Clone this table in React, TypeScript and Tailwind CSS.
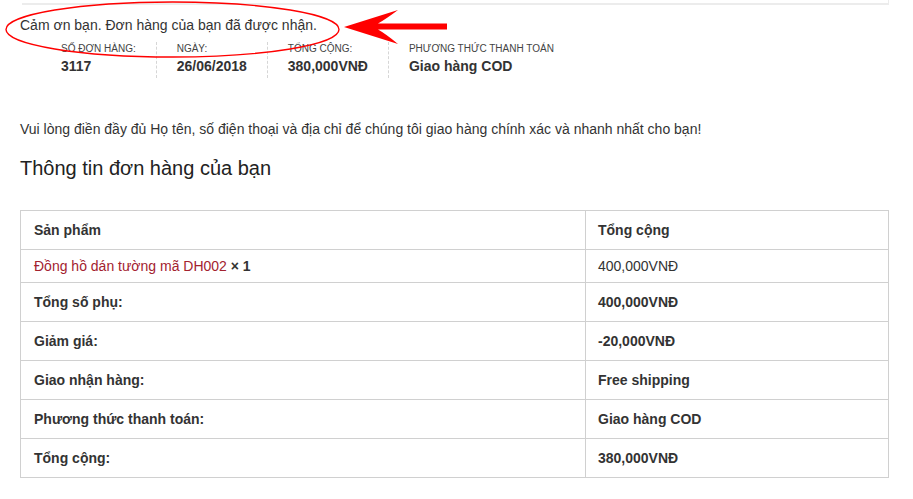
const details = [
  { label: "Số đơn hàng:", value: "3117" },
  { label: "Ngày:", value: "26/06/2018" },
  { label: "Tổng cộng:", value: "380,000VNĐ" },
  { label: "Phương thức thanh toán", value: "Giao hàng COD" },
];

const totals = [
  { label: "Tổng số phụ:", value: "400,000VNĐ" },
  { label: "Giảm giá:", value: "-20,000VNĐ" },
  { label: "Giao nhận hàng:", value: "Free shipping" },
  { label: "Phương thức thanh toán:", value: "Giao hàng COD" },
  { label: "Tổng cộng:", value: "380,000VNĐ" },
];

export default function App() {
  return (
    <div className="min-h-[499px] w-[913px] bg-white font-['Liberation_Sans',Arial,sans-serif] text-[#333]">
      <div className="ml-[22px] h-[5px] w-[867px] border-b-2 border-r border-[#ececec]" />

      <div className="relative px-5 pt-[10px]">
        <p className="text-[14px] leading-5">Cảm ơn bạn. Đơn hàng của bạn đã được nhận.</p>

        {/* red annotation: ellipse + arrow */}
        <svg className="pointer-events-none absolute left-0 top-[-5px]" width="460" height="70" viewBox="0 0 460 70">
          <ellipse cx="172.5" cy="29.5" rx="166.5" ry="27.5" fill="none" stroke="#f00" strokeWidth="1.4" />
          <path
            d="M344 27 L398 10 Q386 19 378 23.5 L447 23.5 L447 29.5 L378 29.5 Q386 34 398 44 Z"
            fill="#f00"
          />
        </svg>

        <ul className="ml-[41px] mt-[7px] flex">
          {details.map((d, i) => (
            <li
              key={d.label}
              className={
                i < details.length - 1
                  ? "mr-5 border-r border-dashed border-[#d6d6d6] pb-[2px] pr-5"
                  : "pb-[2px]"
              }
            >
              <div className="text-[10px] uppercase leading-[14px] text-[#444]">{d.label}</div>
              <div className="text-[14px] font-bold leading-5 text-[#333]">{d.value}</div>
            </li>
          ))}
        </ul>

        <p className="mt-[41px] text-[14px] leading-5">
          Vui lòng điền đầy đủ Họ tên, số điện thoại và địa chỉ để chúng tôi giao hàng chính xác và nhanh nhất cho bạn!
        </p>

        <h2 className="mt-[15px] text-[20px] leading-7 text-[#222]">Thông tin đơn hàng của bạn</h2>

        <table className="mt-[28px] w-[869px] border-collapse border border-[#d0d0d0] text-[14px]">
          <thead>
            <tr className="h-[39px]">
              <th className="w-[565px] border border-[#d0d0d0] pl-[13px] text-left font-bold">Sản phẩm</th>
              <th className="border border-[#d0d0d0] pl-3 text-left font-bold">Tổng cộng</th>
            </tr>
          </thead>
          <tbody>
            <tr className="h-[33px]">
              <td className="border border-[#d0d0d0] pl-[13px]">
                <span className="text-[#a3222f]">Đồng hồ dán tường mã DH002</span>{" "}
                <strong className="font-bold">× 1</strong>
              </td>
              <td className="border border-[#d0d0d0] pl-3">400,000VNĐ</td>
            </tr>
          </tbody>
          <tfoot>
            {totals.map((t) => (
              <tr key={t.label} className="h-[39px]">
                <th className="border border-[#d0d0d0] pl-[13px] text-left font-bold">{t.label}</th>
                <td className="border border-[#d0d0d0] pl-3 font-bold">{t.value}</td>
              </tr>
            ))}
          </tfoot>
        </table>
      </div>
    </div>
  );
}
